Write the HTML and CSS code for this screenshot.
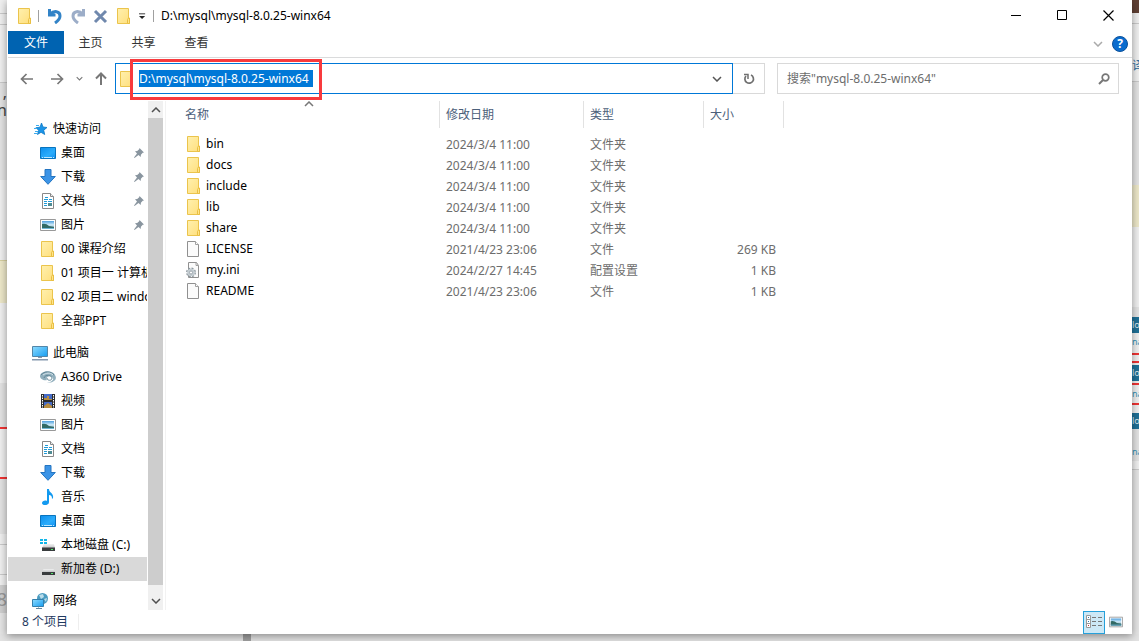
FILE: index.html
```
<!DOCTYPE html>
<html lang="zh-CN">
<head>
<meta charset="utf-8">
<title>D:\mysql\mysql-8.0.25-winx64</title>
<link rel="stylesheet" href="styles.css">
</head>
<body>
<svg class="sprite" aria-hidden="true">
  <defs>
    <linearGradient id="g-folder" x1="0" y1="0" x2="1" y2="1"><stop offset="0" stop-color="#fff0ae"/><stop offset="1" stop-color="#ffdf7c"/></linearGradient>
    <linearGradient id="g-blue" x1="0" y1="0" x2="1" y2="1"><stop offset="0" stop-color="#0c8eed"/><stop offset=".6" stop-color="#2badfc"/><stop offset="1" stop-color="#128ff0"/></linearGradient>
    <linearGradient id="g-screen" x1="0" y1="0" x2="1" y2="1"><stop offset="0" stop-color="#8edcff"/><stop offset="1" stop-color="#159cf0"/></linearGradient>
    <linearGradient id="g-sky" x1="0" y1="0" x2="0" y2="1"><stop offset="0" stop-color="#4f9fdc"/><stop offset=".5" stop-color="#d4eefa"/><stop offset="1" stop-color="#2b6478"/></linearGradient>
    <linearGradient id="g-disk" x1="0" y1="0" x2="0" y2="1"><stop offset="0" stop-color="#f1f1f1"/><stop offset="1" stop-color="#c2c4c6"/></linearGradient>
  </defs>
  <symbol id="folder" viewBox="0 0 16 16"><path d="M1.500.5h11v10h1v5h-12z" fill="url(#g-folder)" stroke="#ebc44c"/><path d="M11.500 15.500v-4l1-1.500h1v5.500z" fill="#ffe48a" stroke="#e9bf43"/></symbol>
  <symbol id="star" viewBox="0 0 16 16"><path d="M9.500 2l1.500 4L15 6.500l-3.300 2.700 1 4.300L9 11.300 5.500 13.500l1.100-4.200L4 6.700l4-.5z" fill="#1a94e8" stroke="#0b78c5" stroke-width=".8"/><path d="M4 4.500h3M2 7.500h3M3 10.500h3M2 12.500h3" stroke="#3bacef"/></symbol>
  <symbol id="desktop" viewBox="0 0 16 16"><path d="M.5 2.500h15v11H.5z" fill="url(#g-blue)" stroke="#0874be"/><path d="M2 12.500h1M4 12.500h8M13 12.500h1" stroke="#bfe8ff"/></symbol>
  <symbol id="download" viewBox="0 0 16 16"><path d="M5 .5h6v7h4.300L8 15.300.7 7.500H5z" fill="#3c94e6" stroke="#2475c1"/></symbol>
  <symbol id="document" viewBox="0 0 16 16"><path d="M2.500.5h8l3 3v12h-11z" fill="#fff" stroke="#888"/><path d="M10.500.5v3h3" fill="#eee" stroke="#888"/><path d="M5 4.500h3M4 6.500h4M9 6.500h3M4 8.500h3M8 8.500h4M4 10.500h3M4 12.500h3" stroke="#219bd7"/><path d="M8 10h4v3H8z" fill="#4f8b93"/></symbol>
  <symbol id="picture" viewBox="0 0 16 16"><path d="M.5 2.500h15v11H.5z" fill="#fff" stroke="#999"/><path d="M2 4h12v8H2z" fill="url(#g-sky)"/><path d="M2 7q4-1 7 2l5 1v2H2z" fill="#326a65"/><path d="M2 11h12v1H2z" fill="#70b5d6"/></symbol>
  <symbol id="computer" viewBox="0 0 16 16"><path d="M.5 1.500h15v10H.5z" fill="url(#g-screen)" stroke="#5386a8"/><path d="M6 12h4v1H6zM0 14h16v1.500H0z" fill="#8497ad"/></symbol>
  <symbol id="drive360" viewBox="0 0 16 16"><path d="M0 7c1-6 13-6 15-1 3 5-2 8-8 8 5-1 8-4 5-6-3-2-7 1-5 3-3 1-7-1-7-4z" fill="#91afbd"/><path d="M1 6c3-4 10-4 13 0M4 9c1-4 8-3 8 0s-5 3-5 0" fill="none" stroke="#638898"/><path d="M3 6c3-2 7-3 10 0" fill="none" stroke="#d7e6ec"/></symbol>
  <symbol id="video" viewBox="0 0 16 16"><path d="M1 1h14v14H1z" fill="#2c2c2c"/><path d="M4 1h8v6H4zM4 9h8v6H4z" fill="#456bc6"/><path d="M4 5h3V3h2v3h3v1H4zM4 13l4-3 4 3v2H4z" fill="#b88d3f"/><path d="M2.500 2v13M13.500 2v13" stroke="#fff" stroke-dasharray="1.500 1"/></symbol>
  <symbol id="music" viewBox="0 0 16 16"><path d="M7 0h2c0 4 5 4 4 9l-1 1c0-3-1-4-3-4v7c0 4-7 4-7 1 0-2 3-3 5-2z" fill="#139af0"/></symbol>
  <symbol id="disk" viewBox="0 0 16 16"><path d="M3.500 8h10L15 11H2z" fill="url(#g-disk)"/><path d="M2 11h13v3H2z" fill="#393c3e"/><path d="M11 12.500h2" stroke="#56e46c"/></symbol>
  <symbol id="sysdisk" viewBox="0 0 16 16"><path d="M4 7h10l1 4H2z" fill="url(#g-disk)"/><path d="M2 10.500h13v3.500H2z" fill="#393c3e"/><path d="M11 12.500h2" stroke="#56e46c"/><path d="M0 2h3v2H0zM4 2h3v2H4zM0 5h3v2H0zM4 5h3v2H4z" fill="#12b6e9"/></symbol>
  <symbol id="network" viewBox="0 0 16 16"><circle cx="10.500" cy="5.500" r="5.500" fill="#4a9bc0"/><path d="M7 2l4-1 1 3-3 2zM12 6l3-1-1 4z" fill="#b9dcea"/><path d="M.5 6.500h11v7H.5z" fill="url(#g-screen)" stroke="#3480ad"/><path d="M4 15.500h6M6 14h1" stroke="#64889e"/></symbol>
  <symbol id="file" viewBox="0 0 16 16"><path d="M1.500.5h8l3 3v12h-11z" fill="#fbfbfb" stroke="#909090"/><path d="M9.500.5v3h3" fill="#fff" stroke="#a0a0a0"/></symbol>
  <symbol id="ini" viewBox="0 0 16 16"><path d="M2.500.5h8l2 3v12h-10z" fill="#fbfbfb" stroke="#909090"/><path d="M10 .5v3h2.500" fill="none" stroke="#a0a0a0"/><circle cx="5" cy="10.500" r="4.200" fill="none" stroke="#8e989f" stroke-width="1.500" stroke-dasharray="2 1.300"/><circle cx="5" cy="10.500" r="2.500" fill="#fff" stroke="#c3ccd1" stroke-width="2.500"/><circle cx="5" cy="10.500" r="1.500" fill="#fff" stroke="#8e989f" stroke-width=".8"/></symbol>
  <symbol id="pin" viewBox="0 0 10 10"><path d="M5.500 0L10 4.500l-1.300.3-1.800 2-.2 2.200-2.200-2L.5 10 0 9.500 3 5.600 1 3.300l2.200-.2 2-1.800z" fill="#89959f"/></symbol>
  <symbol id="chev" viewBox="0 0 10 6"><path d="M1 1l4 4 4-4" fill="none" stroke="currentColor" stroke-width="1.500"/></symbol>
</svg>

<div class="backdrop">
  <div class="strip strip-left" aria-hidden="true">
    <i class="light h13"></i><i class="line"></i><i class="light h10"></i><i class="line"></i><i class="light h57"></i><i class="line"></i>
    <b class="mid h97 edge-text">,<br>n</b><i class="light h80"></i><i class="line sand"></i><i class="cream h42"></i><i class="light h80"></i><i class="mid h44"></i><i class="line red"></i><i class="light h48"></i><i class="line red"></i><i class="mid h55"></i><i class="light h10"></i><i class="line"></i><i class="light h29"></i><i class="line"></i><i class="light h10"></i><b class="dark h28 edge-big">8</b>
  </div>

  <main class="window">
    <header class="titlebar">
      <div class="quick">
        <svg class="ico"><use href="#folder"/></svg>
        <span class="bar"></span>
        <button class="plain" aria-label="撤消"><svg class="ico" viewBox="0 0 16 16"><path d="M2.500 1v6h6M3 6.500C7 2 13 3 13 8c0 3-2 5-5 7" fill="none" stroke="#3283c7" stroke-width="3"/></svg></button>
        <button class="plain" aria-label="恢复"><svg class="ico" viewBox="0 0 16 16"><path d="M13.500 1v6h-6M13 6.500C9 2 3 3 3 8c0 3 2 5 5 7" fill="none" stroke="#9cadc8" stroke-width="3"/></svg></button>
        <button class="plain" aria-label="删除"><svg class="ico" viewBox="0 0 16 16"><path d="M2 3l11 11M13 3L2 14" stroke="#7088ad" stroke-width="3"/></svg></button>
        <button class="plain" aria-label="新建文件夹"><svg class="ico"><use href="#folder"/></svg></button>
        <button class="plain more" aria-label="自定义"><svg width="8" height="8" viewBox="0 0 8 8"><path d="M0 1.500h7" stroke="#222"/><path d="M0 4h7L3.500 7.500z" fill="#222"/></svg></button>
        <span class="bar"></span>
      </div>
      <h1>D:\mysql\mysql-8.0.25-winx64</h1>
      <div class="controls">
        <button class="plain" aria-label="最小化"><svg width="11" height="11"><path d="M0 5.500h10" stroke="#000"/></svg></button>
        <button class="plain" aria-label="最大化"><svg width="11" height="11"><path d="M.5.5h9v9h-9z" fill="none" stroke="#000"/></svg></button>
        <button class="plain" aria-label="关闭"><svg width="11" height="11"><path d="M.5.500l10 10M10.500.500l-10 10" stroke="#000" stroke-width="1.200"/></svg></button>
      </div>
    </header>

    <nav class="tabs">
      <button class="tab active">文件</button><button class="tab">主页</button><button class="tab">共享</button><button class="tab">查看</button>
      <button class="plain collapse" aria-label="展开功能区"><svg width="10" height="6"><use href="#chev"/></svg></button>
      <button class="help" aria-label="帮助">?</button>
    </nav>

    <div class="toolbar">
      <div class="history">
        <button class="plain" aria-label="后退"><svg width="14" height="12" viewBox="0 0 14 12"><path d="M13 6H2M6.500 1L1.500 6l5 5" fill="none" stroke="#777" stroke-width="1.700"/></svg></button>
        <button class="plain" aria-label="前进"><svg width="14" height="12" viewBox="0 0 14 12"><path d="M1 6h11M7.500 1l5 5-5 5" fill="none" stroke="#777" stroke-width="1.700"/></svg></button>
        <button class="plain recent" aria-label="最近位置"><svg width="7" height="5"><use href="#chev"/></svg></button>
        <button class="plain" aria-label="向上"><svg width="12" height="14" viewBox="0 0 12 14"><path d="M6 13V2M1 6.500l5-5 5 5" fill="none" stroke="#777" stroke-width="2"/></svg></button>
      </div>
      <div class="address">
        <svg class="ico"><use href="#folder"/></svg>
        <input class="path" type="text" aria-label="地址" value="D:\mysql\mysql-8.0.25-winx64">
        <button class="plain drop" aria-label="以前的位置"><svg width="10" height="6"><use href="#chev"/></svg></button>
        <span class="callout"></span>
      </div>
      <button class="refresh" aria-label="刷新"><svg width="12" height="12" viewBox="0 0 12 12"><path d="M8 2a4.300 4.300 0 1 1-5 1" fill="none" stroke="#707070" stroke-width="1.700"/><path d="M1 1.500h4V6" fill="none" stroke="#707070" stroke-width="1.500"/></svg></button>
      <div class="search">
        <input type="text" aria-label="搜索" placeholder='搜索"mysql-8.0.25-winx64"'>
        <svg width="12" height="12" viewBox="0 0 12 12"><circle cx="7.500" cy="4.500" r="3.300" fill="none" stroke="#777" stroke-width="1.700"/><path d="M5 7l-4 4" stroke="#777" stroke-width="2"/></svg>
      </div>
    </div>

    <div class="body">
      <aside class="tree">
        <ul>
          <li class="root"><svg class="ico"><use href="#star"/></svg>快速访问</li>
          <li><svg class="ico"><use href="#desktop"/></svg>桌面<svg class="pin"><use href="#pin"/></svg></li>
          <li><svg class="ico"><use href="#download"/></svg>下载<svg class="pin"><use href="#pin"/></svg></li>
          <li><svg class="ico"><use href="#document"/></svg>文档<svg class="pin"><use href="#pin"/></svg></li>
          <li><svg class="ico"><use href="#picture"/></svg>图片<svg class="pin"><use href="#pin"/></svg></li>
          <li><svg class="ico"><use href="#folder"/></svg>00 课程介绍</li>
          <li><svg class="ico"><use href="#folder"/></svg>01 项目一 计算机</li>
          <li><svg class="ico"><use href="#folder"/></svg>02 项目二 windows</li>
          <li><svg class="ico"><use href="#folder"/></svg>全部PPT</li>
        </ul>
        <ul>
          <li class="root"><svg class="ico"><use href="#computer"/></svg>此电脑</li>
          <li><svg class="ico"><use href="#drive360"/></svg>A360 Drive</li>
          <li><svg class="ico"><use href="#video"/></svg>视频</li>
          <li><svg class="ico"><use href="#picture"/></svg>图片</li>
          <li><svg class="ico"><use href="#document"/></svg>文档</li>
          <li><svg class="ico"><use href="#download"/></svg>下载</li>
          <li><svg class="ico"><use href="#music"/></svg>音乐</li>
          <li><svg class="ico"><use href="#desktop"/></svg>桌面</li>
          <li><svg class="ico"><use href="#sysdisk"/></svg>本地磁盘 (C:)</li>
          <li class="selected"><svg class="ico"><use href="#disk"/></svg>新加卷 (D:)</li>
        </ul>
        <ul>
          <li class="root"><svg class="ico"><use href="#network"/></svg>网络</li>
        </ul>
      </aside>
      <div class="scrollbar">
        <button class="plain up" aria-label="向上滚动"><svg width="10" height="6"><use href="#chev"/></svg></button>
        <div class="thumb"></div>
        <button class="plain down" aria-label="向下滚动"><svg width="10" height="6"><use href="#chev"/></svg></button>
      </div>
      <section class="files">
        <table>
          <colgroup><col class="c-name"><col class="c-date"><col class="c-type"><col class="c-size"></colgroup>
          <thead><tr><th>名称<svg class="sort" width="10" height="6"><use href="#chev"/></svg></th><th>修改日期</th><th>类型</th><th>大小</th></tr></thead>
          <tbody>
            <tr><td><svg class="ico"><use href="#folder"/></svg>bin</td><td>2024/3/4 11:00</td><td>文件夹</td><td></td></tr>
            <tr><td><svg class="ico"><use href="#folder"/></svg>docs</td><td>2024/3/4 11:00</td><td>文件夹</td><td></td></tr>
            <tr><td><svg class="ico"><use href="#folder"/></svg>include</td><td>2024/3/4 11:00</td><td>文件夹</td><td></td></tr>
            <tr><td><svg class="ico"><use href="#folder"/></svg>lib</td><td>2024/3/4 11:00</td><td>文件夹</td><td></td></tr>
            <tr><td><svg class="ico"><use href="#folder"/></svg>share</td><td>2024/3/4 11:00</td><td>文件夹</td><td></td></tr>
            <tr><td><svg class="ico"><use href="#file"/></svg>LICENSE</td><td>2021/4/23 23:06</td><td>文件</td><td>269 KB</td></tr>
            <tr><td><svg class="ico"><use href="#ini"/></svg>my.ini</td><td>2024/2/27 14:45</td><td>配置设置</td><td>1 KB</td></tr>
            <tr><td><svg class="ico"><use href="#file"/></svg>README</td><td>2021/4/23 23:06</td><td>文件</td><td>1 KB</td></tr>
          </tbody>
        </table>
      </section>
    </div>

    <footer class="status">
      <span class="count">8 个项目</span>
      <div class="views">
        <button class="view on" aria-label="详细信息"><svg width="16" height="14" viewBox="0 0 16 14"><path d="M.5.5h4v12h-4zM.5 4.500h4M.5 8.500h4" fill="#fff" stroke="#999"/><path d="M6 2.500h4M12 2.500h4M6 6.500h4M12 6.500h4M6 10.500h4M12 10.500h4" stroke="#777"/><path d="M2 2h1v1H2zM2 6h1v1H2z" fill="#37a"/><path d="M2 10h1v1H2z" fill="#c33"/></svg></button>
        <button class="view" aria-label="大缩略图"><svg width="14" height="14" viewBox="0 0 16 16"><use href="#picture"/></svg></button>
      </div>
    </footer>
  </main>

  <div class="strip strip-right" aria-hidden="true">
    <i class="avatar h13"></i><i class="light h10"></i><i class="line"></i><b class="light h57 edge-cjk">译</b><i class="line"></i><i class="mid h103"></i><i class="cream h42"></i><i class="light h80"></i><i class="mid h10"></i>
    <b class="teal">lo</b><b class="light h20 edge-link">na</b><i class="line red"></i><i class="light h6"></i><i class="line red"></i><i class="light h2"></i>
    <b class="teal">lo</b><i class="light h2"></i><i class="line red"></i><b class="light h18 edge-link">na</b><i class="line red"></i><i class="light h8"></i>
    <b class="teal">lo</b><i class="mid h14"></i><b class="mid h18 edge-link">na</b><i class="light h8"></i><i class="line"></i>
  </div>
  <div class="strip-bottom"><i class="hthumb"></i></div>
</div>
</body>
</html>
```
FILE: styles.css
```
* { box-sizing: border-box; }
html, body { height: 100%; margin: 0; overflow: hidden; }
body { font: 12px/16px "Noto Sans", "Noto Sans CJK SC", sans-serif; color: #000; background: #e6e6e6; }
button, input { font: inherit; color: inherit; }
.plain { border: 0; padding: 0; background: none; display: flex; align-items: center; justify-content: center; }
.sprite { position: absolute; width: 0; height: 0; }
.ico { width: 16px; height: 16px; flex: none; display: block; }

.backdrop { display: grid; grid-template: minmax(0, 1fr) 7px / 7px minmax(0, 1fr) 7px; height: 100vh; }
.strip { display: flex; flex-direction: column; overflow: hidden; background: #e4e4e4; }
.strip > * { display: block; flex: none; overflow: hidden; font-style: normal; font-weight: 400; }
.strip-bottom { grid-column: 1 / -1; background: #e2e2e2; padding-left: 243px; }
.hthumb { display: block; width: 8px; height: 7px; background: #9f9f9f; }
.strip .light { background: #efefef; }
.strip .mid { background: #e2e2e2; }
.strip .dark { background: #cfcfcf; }
.strip .cream { background: #ece7c8; }
.strip .avatar { background: #604034; }
.line { height: 1px; background: #c9c9c9; }
.sand { background: #d6cf9f; }
.red { height: 2px; background: #e33; }
.teal { height: 16px; background: #1f7096; color: #dceaf2; font-size: 9px; line-height: 16px; }
.edge-text { font-size: 16px; line-height: 18px; color: #444; direction: rtl; }
.edge-big { font-size: 18px; line-height: 28px; color: #999; direction: rtl; }
.edge-cjk { padding-top: 34px; color: #276a9c; }
.edge-link { font-size: 9px; line-height: 18px; color: #3792b7; }
.h2 { height: 2px; } .h6 { height: 6px; } .h8 { height: 8px; } .h10 { height: 10px; } .h13 { height: 13px; }
.h14 { height: 14px; } .h18 { height: 18px; } .h20 { height: 20px; } .h28 { height: 28px; } .h29 { height: 29px; }
.h42 { height: 42px; } .h44 { height: 44px; } .h48 { height: 48px; } .h55 { height: 55px; }
.h57 { height: 57px; } .h80 { height: 80px; } .h97 { height: 97px; } .h103 { height: 103px; }

.window { position: relative; z-index: 1; display: flex; flex-direction: column; min-width: 0; background: #fff; box-shadow: 0 2px 8px rgba(0, 0, 0, .4); padding-left: 1px; }

.titlebar { display: flex; align-items: center; height: 31px; padding: 0 1px 0 9px; }
.quick { display: flex; align-items: center; gap: 7px; }
.bar { width: 1px; height: 12px; background: #a0a0a0; }
.more { width: 7px; }
.quick .bar:nth-child(2) { margin: 0 1px 0 -2px; }
h1 { margin: 0 0 0 7px; font-size: 12px; font-weight: 400; }
.controls { margin-left: auto; display: flex; align-self: stretch; }
.controls .plain { width: 46px; }

.tabs { display: flex; align-items: flex-start; height: 27px; border-bottom: 1px solid #dadbdc; }
.tab { width: 53px; height: 23px; border: 0; padding: 0; background: none; color: #333; }
.tab.active { width: 56px; background: #0063b1; color: #fff; }
.collapse { margin-left: auto; width: 20px; height: 25px; color: #aaa; }
.help { width: 16px; height: 16px; margin: 5px 4px 0 4px; padding: 0; border: 1px solid #0b519b; border-radius: 50%; background: #0a6cce; color: #fff; font-weight: 700; line-height: 14px; }

.toolbar { display: flex; align-items: center; height: 43px; padding: 0 13px 2px 12px; }
.history { display: flex; align-items: center; gap: 16px; width: 95px; color: #777; }
.history .recent { margin: 0 -4px; }
.address { position: relative; display: flex; align-items: center; flex: 1; min-width: 0; height: 31px; border: 1px solid #0078d7; padding-left: 3px; }
.path { width: 174px; height: 17px; margin-left: 4px; padding: 0; border: 0; outline: 0; background: #0078d7; color: #fff; }
.drop { margin-left: auto; width: 30px; height: 28px; color: #555; }
.callout { position: absolute; left: 14px; top: -5px; width: 192px; height: 41px; border: 3px solid #f83a3d; pointer-events: none; }
.refresh { width: 32px; height: 31px; padding: 0; border: 1px solid #d9d9d9; border-left: 0; background: none; display: flex; align-items: center; justify-content: center; }
.search { display: flex; align-items: center; flex: 0 1 342px; height: 31px; margin-left: 12px; border: 1px solid #d9d9d9; padding: 0 8px 0 9px; }
.search input { flex: 1; min-width: 0; border: 0; outline: 0; padding: 0; background: none; }
.search input::placeholder { color: #6d6d6d; opacity: 1; }

.body { display: flex; flex: 1; min-height: 0; }
.tree { width: 139px; padding-top: 16px; overflow: hidden; }
.tree ul { list-style: none; margin: 0 0 8px; padding: 0; }
.tree li { display: flex; align-items: center; gap: 5px; height: 24px; padding: 0 3px 0 32px; white-space: nowrap; }
.tree .root { padding-left: 24px; }
.tree .selected { background: #d9d9d9; }
.pin { width: 10px; height: 10px; margin-left: auto; }
.scrollbar { display: flex; flex-direction: column; width: 15px; margin-left: 1px; background: #f0f0f0; color: #505050; }
.scrollbar .plain { height: 17px; flex: none; }
.scrollbar .down { height: 25px; padding-top: 7px; }
.up svg, .sort { transform: rotate(180deg); }
.thumb { flex: 1; background: #cdcdcd; }
.files { flex: 1; min-width: 0; margin-left: 2px; border-left: 1px solid #f2f2f2; }

table { table-layout: fixed; width: 618px; border-collapse: separate; border-spacing: 0; }
.c-name { width: 274px; } .c-date { width: 144px; } .c-type { width: 120px; } .c-size { width: 80px; }
th { position: relative; height: 27px; padding: 0 0 0 6px; border-right: 1px solid #e2e2e2; text-align: left; font-weight: 400; color: #4c607a; }
th:first-child { padding-left: 19px; }
.sort { position: absolute; left: 138px; top: 0; color: #777; }
tbody::before { content: ""; display: block; height: 6px; }
td { height: 21px; padding: 0 0 0 6px; line-height: 20px; color: #6d6d6d; white-space: nowrap; }
td:first-child { display: flex; align-items: center; gap: 4px; padding: 0 0 1px 20px; color: #000; }
td:last-child { padding: 0 8px 0 0; text-align: right; }

.status { display: flex; align-items: center; height: 24px; padding: 0 5px 0 14px; color: #1f3a5f; }
.count { padding-right: 10px; border-right: 1px solid #eee; }
.views { display: flex; margin-left: auto; }
.view { display: flex; align-items: center; justify-content: center; width: 22px; height: 23px; padding: 0; border: 1px solid transparent; background: none; }
.view.on { border-color: #26a0da; background: #cce8f6; }
```
